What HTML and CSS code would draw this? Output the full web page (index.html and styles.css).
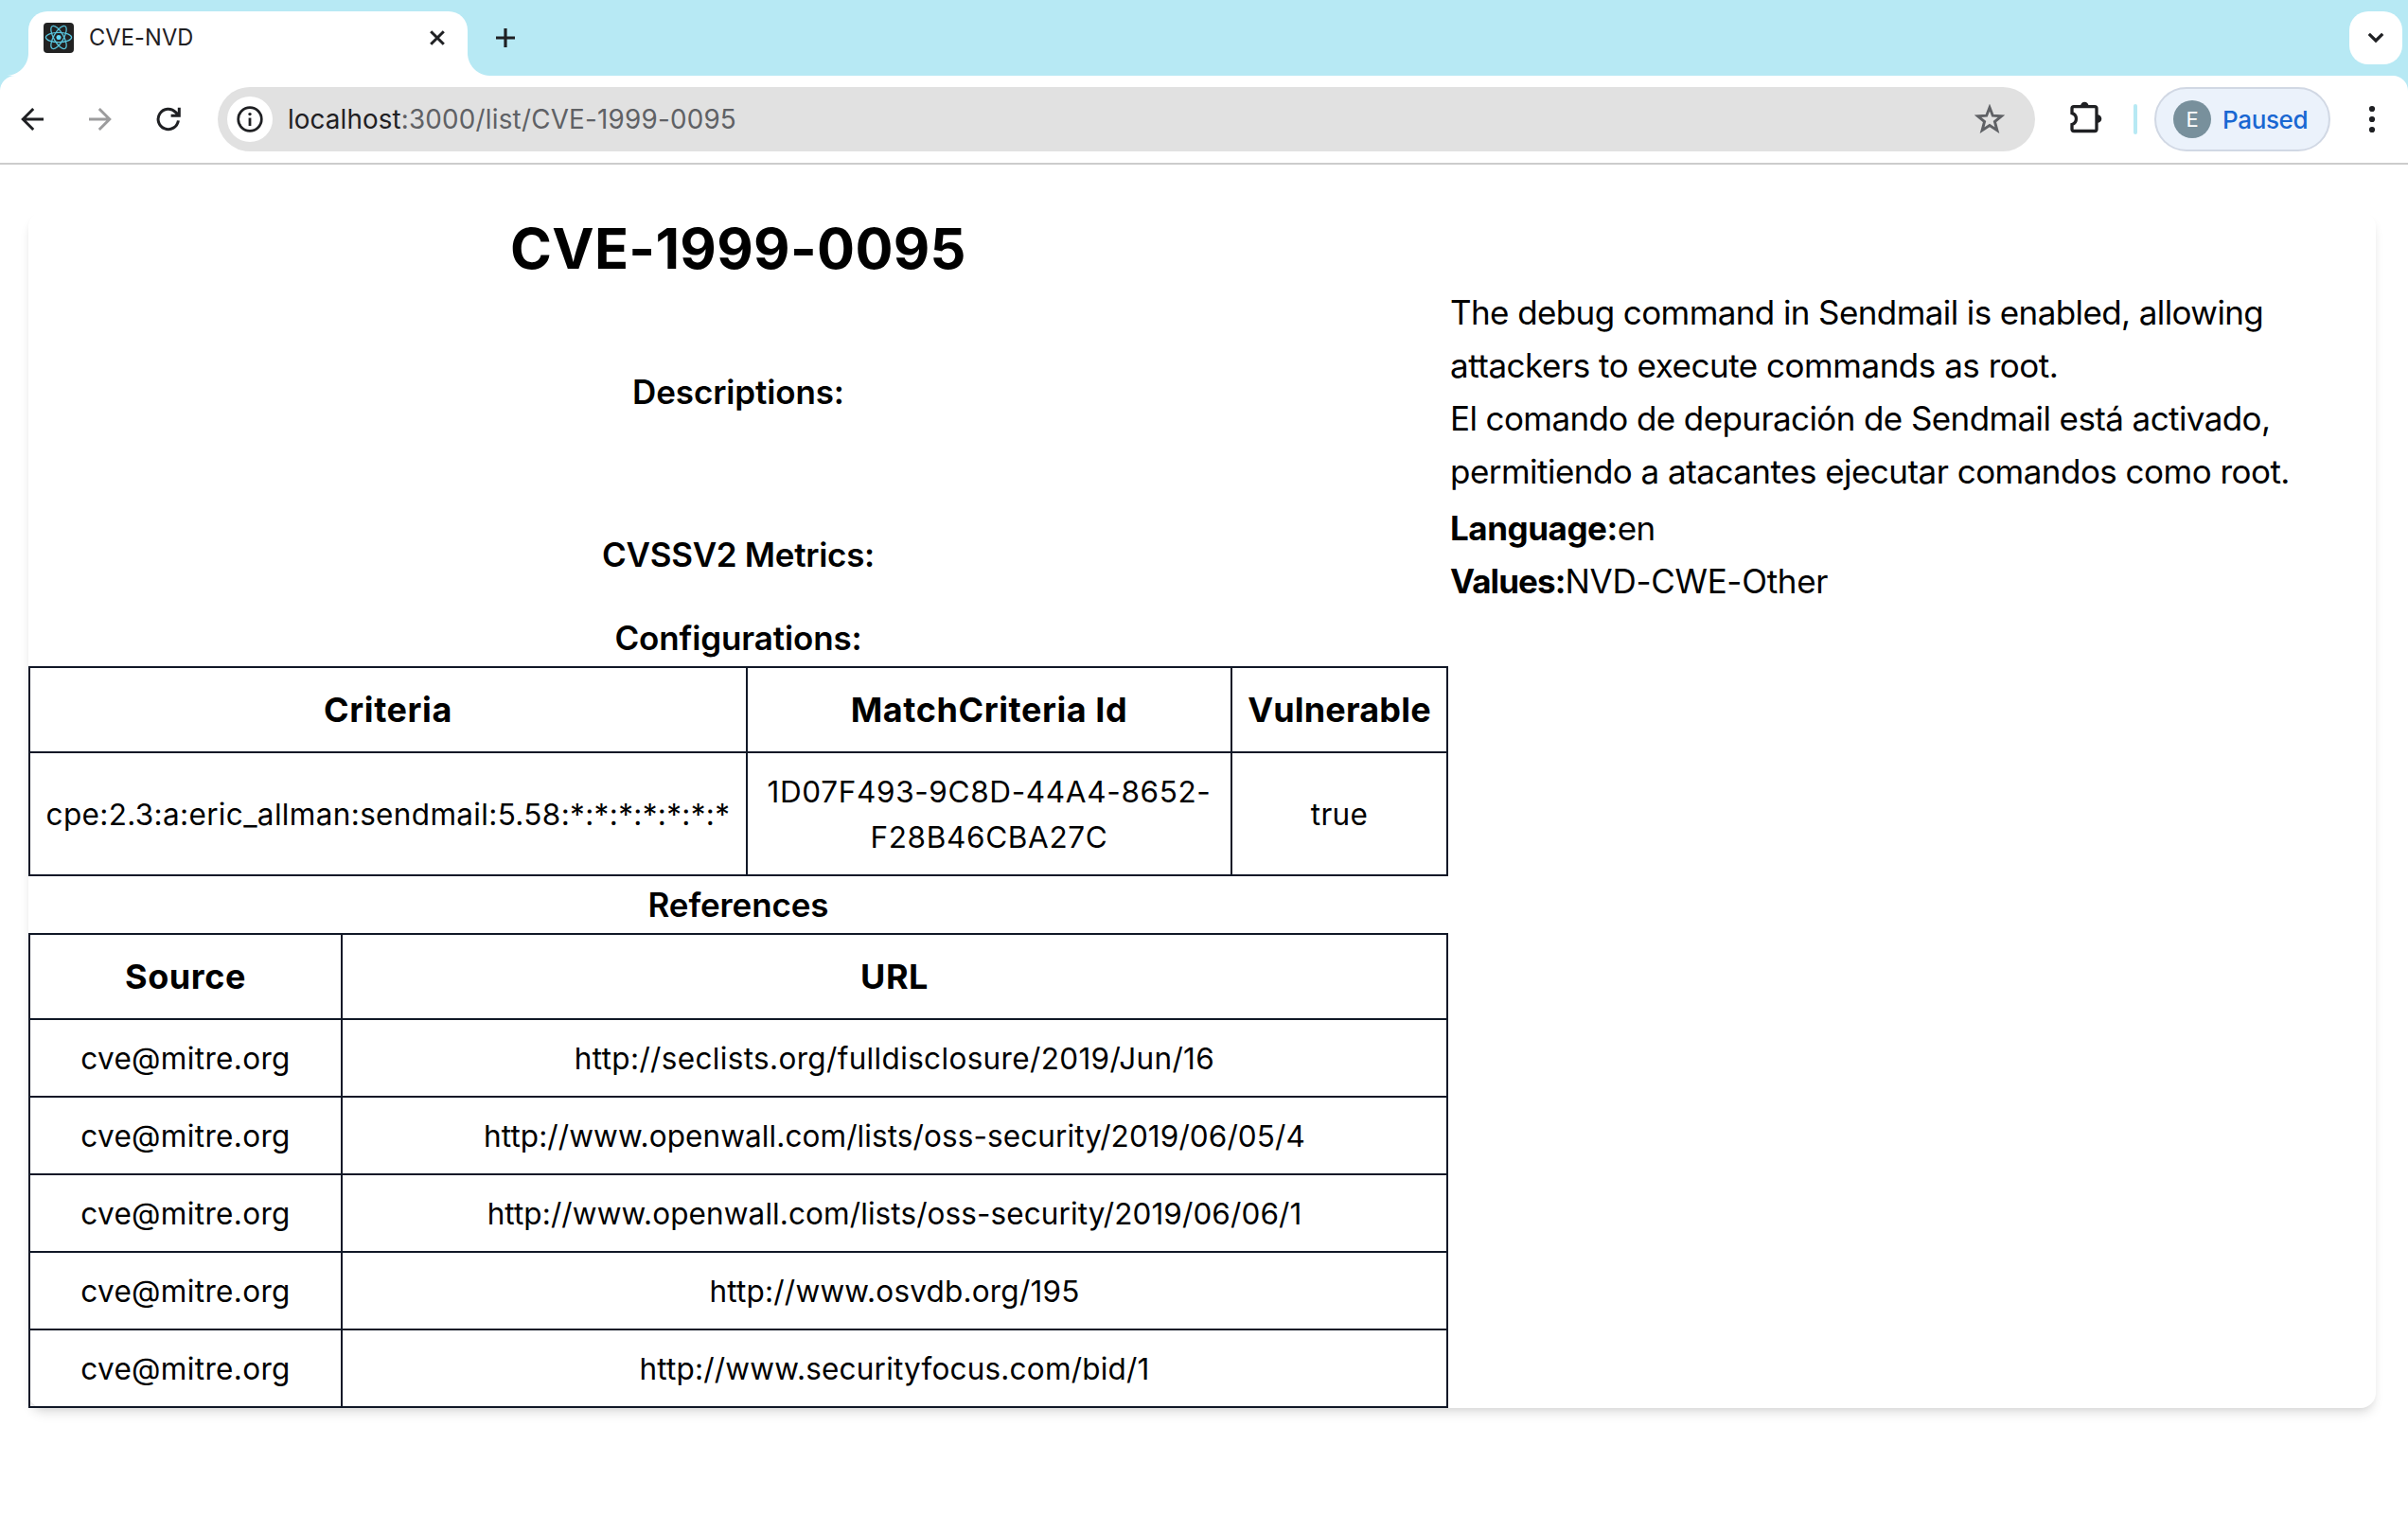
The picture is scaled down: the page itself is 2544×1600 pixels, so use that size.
FILE: index.html
```html
<!DOCTYPE html>
<html lang="en">
<head>
<meta charset="utf-8">
<title>CVE-NVD</title>
<link rel="stylesheet" href="styles.css">
</head>
<body>
<header class="browser">
  <div class="tab-strip">
    <div class="tab">
      <svg class="favicon" viewBox="0 0 32 32">
        <rect width="32" height="32" rx="4" fill="#222"/>
        <g fill="none" stroke="#58c4dc" stroke-width="1.3">
          <ellipse cx="16" cy="15.5" rx="13.6" ry="5.2"/>
          <ellipse cx="16" cy="15.5" rx="13.6" ry="5.2" transform="rotate(60 16 15.5)"/>
          <ellipse cx="16" cy="15.5" rx="13.6" ry="5.2" transform="rotate(120 16 15.5)"/>
        </g>
        <circle cx="16" cy="15.5" r="2.5" fill="#61dafb"/>
      </svg>
      <span class="tab-title">CVE-NVD</span>
      <svg class="tab-close" viewBox="0 0 16 16"><path d="M1.2 1.2 14.8 14.8M14.8 1.2 1.2 14.8" stroke="#1f2023" stroke-width="3" fill="none"/></svg>
    </div>
    <svg class="new-tab" viewBox="0 0 20 20"><path d="M10 0V20M0 10H20" stroke="#1f2023" stroke-width="3.2" fill="none"/></svg>
    <div class="tab-search">
      <svg class="chevron" viewBox="0 0 18 12"><path d="M1.8 1.8 9 9 16.2 1.8" stroke="#1f2023" stroke-width="3.2" fill="none"/></svg>
    </div>
  </div>
  <nav class="toolbar">
    <svg class="nav-icon" viewBox="0 0 24 24"><path d="M13.2 1 2.2 12 13.2 23M2.2 12H24" stroke="#1f2023" stroke-width="2.9" fill="none"/></svg>
    <svg class="nav-icon forward" viewBox="0 0 24 24"><path d="M10.8 1 21.8 12 10.8 23M21.8 12H0" stroke="#9c9c9d" stroke-width="2.9" fill="none"/></svg>
    <svg class="nav-icon reload" viewBox="0 0 26 26"><path d="M23.4 14.4A10.7 10.7 0 1 1 20.6 5.6L23.4 8.6M24.3 .8V9.3H15.6" stroke="#1f2023" stroke-width="3" fill="none"/></svg>
    <div class="omnibox">
      <div class="site-info">
        <svg class="info" viewBox="0 0 28 28"><circle cx="14" cy="14" r="12.3" stroke="#1f2023" stroke-width="2.7" fill="none"/><path d="M14 12.6V21" stroke="#1f2023" stroke-width="2.8"/><circle cx="14" cy="8.6" r="1.7" fill="#1f2023"/></svg>
      </div>
      <div class="url"><span class="host">localhost</span>:3000/list/CVE-1999-0095</div>
      <svg class="star" viewBox="0 0 32 32"><path d="M16 3.6 19.3 12.2 28.6 12.7 21.4 18.5 23.9 27.6 16 22.5 8.1 27.6 10.6 18.5 3.4 12.7 12.7 12.2Z" stroke="#5f6165" stroke-width="2.9" fill="none"/></svg>
    </div>
    <svg class="puzzle" viewBox="0 0 34 34"><path d="M5 5.6H26Q28 5.6 28 7.6V29.5Q28 31.5 26 31.5H4Q2 31.5 2 29.5V24.5A6.2 6.2 0 0 0 2 12.6V7.6Q2 5.6 4 5.6Z" stroke="#1f2023" stroke-width="3.3" fill="none"/><path d="M11 5A4.3 4.3 0 0 1 19.6 5ZM29 14.2A4.3 4.3 0 0 1 29 22.8Z" fill="#1f2023"/></svg>
    <div class="divider"></div>
    <div class="profile"><span class="avatar">E</span><span class="profile-label">Paused</span></div>
    <svg class="menu" viewBox="0 0 8 30"><g fill="#1f2023"><circle cx="4" cy="4" r="3.1"/><circle cx="4" cy="15" r="3.1"/><circle cx="4" cy="26" r="3.1"/></g></svg>
  </nav>
</header>

<main class="card">
  <div class="heading-cell"><h1>CVE-1999-0095</h1></div>
  <div class="label">Descriptions:</div>
  <div class="value">
    <p class="english">The debug command in Sendmail is enabled, allowing <span class="loose">attackers to execute commands as root.</span></p>
    <p class="spanish">El comando de depuración de Sendmail está activado, <span class="normal">permitiendo a atacantes ejecutar comandos como root.</span></p>
  </div>
  <div class="label label-metrics">CVSSV2 Metrics:</div>
  <div class="value">
    <p><b>Language:</b>en</p>
    <p class="weakness"><b class="values">Values:</b>NVD-CWE-Other</p>
  </div>
  <div class="section">
    <h2>Configurations:</h2>
    <table>
      <colgroup><col class="c-criteria"><col class="c-match"><col></colgroup>
      <tr><th>Criteria</th><th>MatchCriteria Id</th><th class="vulnerable">Vulnerable</th></tr>
      <tr><td>cpe:2.3:a:eric_allman:sendmail:5.58:*:*:*:*:*:*:*</td><td class="match">1D07F493-9C8D-44A4-8652-<br>F28B46CBA27C</td><td>true</td></tr>
    </table>
    <h2>References</h2>
    <table>
      <colgroup><col class="c-source"><col></colgroup>
      <tr><th>Source</th><th>URL</th></tr>
      <tr><td>cve@mitre.org</td><td>http://seclists.org/fulldisclosure/2019/Jun/16</td></tr>
      <tr><td>cve@mitre.org</td><td class="tight">http://www.openwall.com/lists/oss-security/2019/06/05/4</td></tr>
      <tr><td>cve@mitre.org</td><td class="tight">http://www.openwall.com/lists/oss-security/2019/06/06/1</td></tr>
      <tr><td>cve@mitre.org</td><td class="snug">http://www.osvdb.org/195</td></tr>
      <tr><td>cve@mitre.org</td><td class="snug">http://www.securityfocus.com/bid/1</td></tr>
    </table>
  </div>
</main>
</body>
</html>
```
FILE: styles.css
```css
* { box-sizing: border-box; }
body {
  min-height: 100vh;
  margin: 0;
  background: #fff;
  color: #000;
  font-family: Inter, "Liberation Sans", sans-serif;
}
svg { display: block; flex: none; }
h1, h2, p { margin: 0; }

/* Browser window */
.browser { background: #b7e9f4; }
.tab-strip {
  display: flex;
  align-items: center;
  height: 80px;
  padding: 0 6px 0 30px;
}
.tab {
  position: relative;
  display: flex;
  align-items: center;
  align-self: flex-end;
  width: 464px;
  height: 68px;
  padding: 0 24px 12px 16px;
  background: #fff;
  border-radius: 20px 20px 0 0;
}
.tab::before, .tab::after {
  content: "";
  position: absolute;
  bottom: 0;
  width: 24px;
  height: 24px;
}
.tab::before { left: -24px; background: radial-gradient(circle at 0 0, transparent 23.5px, #fff 24.5px); }
.tab::after { right: -24px; background: radial-gradient(circle at 100% 0, transparent 23.5px, #fff 24.5px); }
.favicon { width: 32px; height: 32px; }
.tab-title {
  flex: 1;
  margin-left: 16px;
  font-size: 23.6px;
  letter-spacing: 0.12px;
  line-height: 32px;
  color: #1f2023;
}
.tab-close { width: 16px; height: 16px; }
.new-tab { width: 20px; height: 20px; margin-left: 30px; }
.tab-search {
  display: flex;
  align-items: center;
  justify-content: center;
  width: 56px;
  height: 56px;
  margin-left: auto;
  background: #fff;
  border-radius: 20px;
}
.chevron { width: 18px; height: 12px; }
.toolbar {
  display: flex;
  align-items: center;
  height: 94px;
  padding: 0 34px 0 22px;
  background: #fff;
  border-bottom: 2px solid #ccc;
  border-radius: 16px 16px 0 0;
}
.nav-icon { width: 24px; height: 24px; }
.forward { margin-left: 48px; }
.reload { width: 26px; height: 26px; margin-left: 47px; }
.omnibox {
  display: flex;
  align-items: center;
  width: 1920px;
  height: 68px;
  margin-left: 39px;
  padding: 0 32px 0 10px;
  background: #e1e1e1;
  border-radius: 34px;
}
.site-info {
  display: flex;
  align-items: center;
  justify-content: center;
  width: 48px;
  height: 48px;
  background: #fff;
  border-radius: 50%;
}
.info { width: 28px; height: 28px; }
.url {
  flex: 1;
  margin-left: 16px;
  font-size: 27.8px;
  letter-spacing: 0.22px;
  color: #5f6165;
}
.host { letter-spacing: 0.1px; color: #1f2023; }
.star { width: 32px; height: 32px; }
.puzzle { width: 34px; height: 34px; margin-left: 37px; margin-top: -4px; }
.divider { width: 4px; height: 32px; margin-left: 33px; background: #b7e9f4; border-radius: 2px; }
.profile {
  display: flex;
  align-items: center;
  width: 186px;
  height: 68px;
  margin-left: 18px;
  padding-left: 18px;
  background: #ebf2fb;
  border: 2px solid #d1d8e4;
  border-radius: 34px;
}
.avatar {
  width: 40px;
  height: 40px;
  background: #78909c;
  border-radius: 50%;
  color: #fff;
  font-size: 22px;
  line-height: 40px;
  text-align: center;
}
.profile-label {
  margin-left: 12px;
  font-size: 26px;
  font-weight: 500;
  letter-spacing: -0.35px;
  color: #1967d2;
}
.menu { width: 8px; height: 30px; margin-left: auto; }

/* Vulnerability details */
.card {
  display: grid;
  grid-template-columns: 1500px 1fr;
  margin: 50px 34px 0 30px;
  border-radius: 16px;
  box-shadow: 0 8px 12px -2px rgba(0, 0, 0, .1), 0 4px 8px -4px rgba(0, 0, 0, .1);
}
.heading-cell { grid-column: 1 / -1; width: 1500px; padding: 2px; }
h1 {
  font-size: 59.4px;
  font-weight: 700;
  line-height: 72px;
  letter-spacing: 0.3px;
  text-align: center;
}
.label, h2 {
  font-size: 35px;
  font-weight: 600;
  line-height: 56px;
  letter-spacing: -0.13px;
  text-align: center;
}
.label { align-self: center; }
.label-metrics { letter-spacing: -0.3px; }
.value {
  padding: 2px;
  font-size: 35px;
  line-height: 56px;
  letter-spacing: -0.53px;
}
.english { letter-spacing: -0.6px; }
.loose { letter-spacing: -0.48px; }
.spanish { letter-spacing: -0.6px; }
.normal { letter-spacing: -0.53px; }
.weakness { letter-spacing: -0.3px; }
.value b { letter-spacing: -0.45px; }
.value .values { letter-spacing: -0.9px; }
h2 { padding: 2px; }
table {
  width: 1500px;
  table-layout: fixed;
  border-collapse: collapse;
}
.c-criteria { width: 758px; }
.c-match { width: 512px; }
.c-source { width: 330px; }
th, td {
  padding: 16px 0;
  border: 2px solid #111827;
  text-align: center;
}
th {
  font-size: 36px;
  font-weight: 700;
  line-height: 56px;
  letter-spacing: 0.58px;
}
.vulnerable { letter-spacing: 0.17px; }
td {
  padding: 17px 0 15px;
  font-size: 31.5px;
  line-height: 48px;
  letter-spacing: 0.34px;
}
.match { letter-spacing: 0.65px; }
.tight { letter-spacing: 0.09px; }
.snug { letter-spacing: 0.2px; }
```
